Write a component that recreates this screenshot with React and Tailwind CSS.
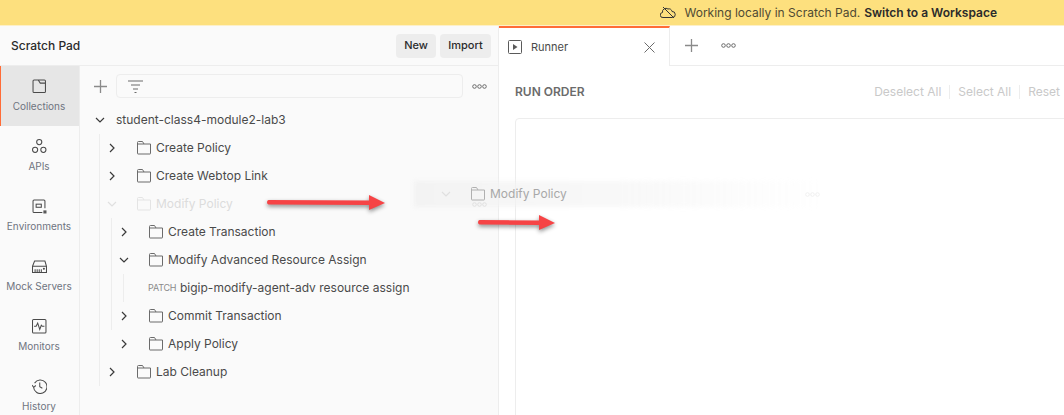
import React from 'react';

const Chevron = ({ open, faded }) => (
    <svg width="12" height="12" viewBox="0 0 12 12" fill="none" stroke={faded ? '#e0e0e0' : '#3a3a3a'} strokeWidth="1.2">
        {open ? <path d="M2 4l4 4 4-4" /> : <path d="M4 2l4 4-4 4" />}
    </svg>
);

const Folder = ({ color = '#6b6b6b' }) => (
    <svg width="14" height="14" viewBox="0 0 14 14" fill="none" stroke={color} strokeWidth="1">
        <path d="M.5 12.5v-11a1 1 0 0 1 1-1h4l1.5 2.5h6.5v9.5a.5.5 0 0 1-.5.5h-12a.5.5 0 0 1-.5-.5zM.5 3h6.500" />
    </svg>
);

const Dots = ({ color = '#6b6b6b' }) => (
    <svg width="15" height="5" viewBox="0 0 15 5" fill="none" stroke={color} strokeWidth="1">
        <circle cx="2.500" cy="2.500" r="1.800" />
        <circle cx="7.500" cy="2.500" r="1.800" />
        <circle cx="12.500" cy="2.500" r="1.800" />
    </svg>
);

const Plus = () => (
    <svg width="13" height="13" viewBox="0 0 13 13" stroke="#8a8a8a" strokeWidth="1.300">
        <path d="M6.500 0v13M0 6.500h13" />
    </svg>
);

const navItems = [
    { label: 'Collections', active: true, icon: <path d="M1 2a1 1 0 0 1 1-1h10a1 1 0 0 1 1 1v10a1 1 0 0 1-1 1H2a1 1 0 0 1-1-1zM6 1l2 3h5" /> },
    { label: 'APIs', icon: <><circle cx="7" cy="3" r="2.500" /><circle cx="3" cy="10.500" r="2.500" /><circle cx="11" cy="10.500" r="2.500" /></> },
    { label: 'Environments', icon: <><path d="M12.500 9V2a1 1 0 0 0-1-1H2a1 1 0 0 0-1 1v10a1 1 0 0 0 1 1h8" /><rect x="4" y="5" width="5" height="3" /><rect x="11" y="11" width="3" height="3" fill="#5a5a5a" stroke="none" /></> },
    { label: 'Mock Servers', icon: <><path d="M.5 7l2-5h10l1.500 5v6H.5zM.5 7h13.500" /><path d="M3 13v-3M5 13v-3M7 13v-3M9 13v-3" /><circle cx="11.500" cy="9.500" r=".5" /></> },
    { label: 'Monitors', icon: <><rect x=".5" y=".5" width="13" height="13" rx="1" /><path d="M2 7h2l1.500-3 2 6 1.500-4 1 1h2" /></> },
    { label: 'History', icon: <><path d="M2.500 4a6.500 6.500 0 1 1-1 4" /><path d="M0 6l1.700 2 2-1.700M7.500 3.500V7.500l2.500 1.500" /></> },
];

const rows = [
    { name: 'Create Policy', indent: 0 },
    { name: 'Create Webtop Link', indent: 0 },
    { name: 'Modify Policy', indent: 0, open: true, faded: true },
    { name: 'Create Transaction', indent: 1 },
    { name: 'Modify Advanced Resource Assign', indent: 1, open: true },
    { request: true },
    { name: 'Commit Transaction', indent: 1 },
    { name: 'Apply Policy', indent: 1 },
    { name: 'Lab Cleanup', indent: 0 },
];

const Row = ({ row }) => {
    if (row.request) {
        return (
            <div className="h-7 flex items-center pl-[68px] whitespace-nowrap">
                <span className="text-[9px] text-[#8a8a8a] w-[32px] tracking-[-0.2px]">PATCH</span>
                <span className="text-xs text-[#4a4a4a]">bigip-modify-agent-adv resource assign</span>
            </div>
        );
    }
    return (
        <div className={`h-7 flex items-center ${row.indent ? 'pl-[38px]' : 'pl-[26px]'}`}>
            <Chevron open={row.open} faded={row.faded} />
            <span className="ml-[19px]"><Folder color={row.faded ? '#e4e4e4' : '#6b6b6b'} /></span>
            <span className={`ml-[5px] text-xs ${row.faded ? 'text-[#dcdcdc]' : 'text-[#4a4a4a]'}`}>{row.name}</span>
        </div>
    );
};

const Arrow = ({ className, width }) => (
    <svg className={className} width={width} height="18" viewBox={`0 0 ${width} 18`} style={{ filter: 'drop-shadow(0 2px 2px rgba(0,0,0,0.45))' }}>
        <path d={`M1.500 6L${width - 16} 6.500V1L${width} 9l-16 7v-5L1.500 10.500Q0 10 0 8.200 0 6.300 1.500 6z`} fill="#f64345" />
    </svg>
);

export default function App() {
    return (
        <div className="relative w-[1064px] h-[415px] overflow-hidden bg-white font-['Inter',sans-serif]">
            {/* Top banner */}
            <div className="h-[26px] bg-[#fde07e] flex items-center justify-end pr-[67px] text-xs text-[#4f4a33] border-b border-[#fdf0c8]">
                <svg className="mr-2" width="16" height="13" viewBox="0 0 16 13" fill="none" stroke="#333" strokeWidth="1">
                    <path d="M4 11.500H3a2.500 2.500 0 0 1-.5-5A3.500 3.500 0 0 1 8 3a3 3 0 0 1 4 2.500 3 3 0 0 1 .5 6zM3 1l11 11" />
                </svg>
                <span>Working locally in Scratch Pad.</span>
                <span className="ml-1 font-semibold text-[#2b2b2b]">Switch to a Workspace</span>
            </div>

            <div className="flex h-[389px]">
                {/* Left panel */}
                <div className="w-[499px] shrink-0 bg-[#fafafa] border-r border-[#ededed] flex flex-col">
                    <div className="h-10 shrink-0 flex items-center justify-between pl-[11px] pr-[7px] border-b border-[#ededed]">
                        <span className="text-xs font-medium text-[#2b2b2b]">Scratch Pad</span>
                        <div className="flex gap-1">
                            <div className="h-6 w-10 rounded bg-[#ededed] flex items-center justify-center text-[11px] font-medium text-[#2b2b2b]">New</div>
                            <div className="h-6 w-[51px] rounded bg-[#ededed] flex items-center justify-center text-[11px] font-medium text-[#2b2b2b]">Import</div>
                        </div>
                    </div>
                    <div className="flex flex-1">
                        {/* Nav rail */}
                        <div className="w-20 shrink-0 border-r border-[#ededed]">
                            {navItems.map((item) => (
                                <div key={item.label} className={`h-[60px] flex flex-col items-center justify-center gap-[5px] ${item.active ? 'pr-[2px] bg-[#e6e6e6] border-l border-[#ff6c37]' : 'pr-[1px]'}`}>
                                    <svg width="15" height="15" viewBox="0 0 14.500 14.500" fill="none" stroke="#4a4a4a" strokeWidth="1">{item.icon}</svg>
                                    <span className="text-[10px] leading-[14px] text-[#6f7480] whitespace-nowrap">{item.label}</span>
                                </div>
                            ))}
                        </div>
                        {/* Collection tree */}
                        <div className="flex-1 min-w-0">
                            <div className="h-10 flex items-center pl-[14px] pr-[11px]">
                                <Plus />
                                <div className="ml-[9px] w-[347px] h-6 border border-[#ededed] rounded-sm flex items-center pl-[11px]">
                                    <svg width="15" height="13" viewBox="0 0 15 13" stroke="#6b6b6b" strokeWidth="1"><path d="M0 1h15M3 5h9M5 9h5M6.500 12.500h2" /></svg>
                                </div>
                                <span className="ml-[9px] flex"><Dots /></span>
                            </div>
                            <div className="h-7 flex items-center pl-[14px]">
                                <Chevron open />
                                <span className="ml-[10px] text-xs text-[#4a4a4a]">student-class4-module2-lab3</span>
                            </div>
                            <div className="relative">
                                <div className="absolute left-[19px] top-0 bottom-0 w-px bg-[#ededed]" />
                                <div className="absolute left-[31px] top-[84px] h-[112px] w-px bg-[#ededed]" />
                                <div className="absolute left-[43px] top-[140px] h-7 w-px bg-[#ededed]" />
                                {rows.map((row, i) => <Row key={i} row={row} />)}
                            </div>
                        </div>
                    </div>
                </div>

                {/* Right panel */}
                <div className="flex-1 min-w-0 flex flex-col">
                    <div className="h-10 shrink-0 flex border-b border-[#ededed]">
                        <div className="w-[171px] h-10 bg-white border-t-2 border-r border-t-[#ff6c37] border-r-[#ededed] flex items-center pl-[9px] pr-[14px]">
                            <svg width="14" height="14" viewBox="0 0 14 14" fill="none" stroke="#5a5a5a"><rect x=".5" y=".5" width="13" height="13" rx="1" /><path d="M5 4l4.500 3L5 10z" fill="#5a5a5a" stroke="none" /></svg>
                            <span className="ml-[9px] text-[11px] text-[#4a4a4a]">Runner</span>
                            <svg className="ml-auto" width="11" height="11" viewBox="0 0 11 11" stroke="#6b6b6b"><path d="M.5.5l10 10M10.500.5l-10 10" /></svg>
                        </div>
                        <div className="flex items-center pl-[15px]">
                            <Plus />
                            <span className="ml-[23px] flex"><Dots /></span>
                        </div>
                    </div>
                    <div className="flex-1 pl-4">
                        <div className="h-[52px] flex items-center justify-between -mr-px">
                            <span className="text-xs font-semibold text-[#6b6b6b]">RUN ORDER</span>
                            <div className="flex items-center text-xs text-[#c9c9c9] whitespace-nowrap pr-[5px]">
                                <span>Deselect All</span>
                                <span className="mx-[8px] w-px h-[14px] bg-[#ededed]" />
                                <span>Select All</span>
                                <span className="mx-[8px] w-px h-[14px] bg-[#ededed]" />
                                <span>Reset</span>
                            </div>
                        </div>
                        <div className="h-[320px] -mr-2 border border-[#ededed] rounded-t" />
                    </div>
                </div>
            </div>

            {/* Dragged row ghost */}
            <div className="absolute left-[414px] top-[180px] w-[410px] h-7 flex items-center pl-[26px]">
                <div className="absolute inset-x-0 inset-y-[1px] blur-[2px] bg-gradient-to-r from-[#efefef]/70 via-[#f5f5f5]/70 to-transparent" />
                <span className="relative flex"><Chevron open faded /></span>
                <span className="relative ml-[19px]"><Folder color="#b0b0b0" /></span>
                <span className="relative ml-[5px] text-xs text-[#a8a8a8]">Modify Policy</span>
                <span className="absolute left-[58px] top-[22px] flex"><Dots color="#e0e0e0" /></span>
                <span className="absolute left-[391px] top-[12px] flex"><Dots color="#f0f0f0" /></span>
            </div>

            {/* Annotation arrows */}
            <Arrow className="absolute left-[267px] top-[194px]" width={118} />
            <Arrow className="absolute left-[478px] top-[214px]" width={77} />
        </div>
    );
}
